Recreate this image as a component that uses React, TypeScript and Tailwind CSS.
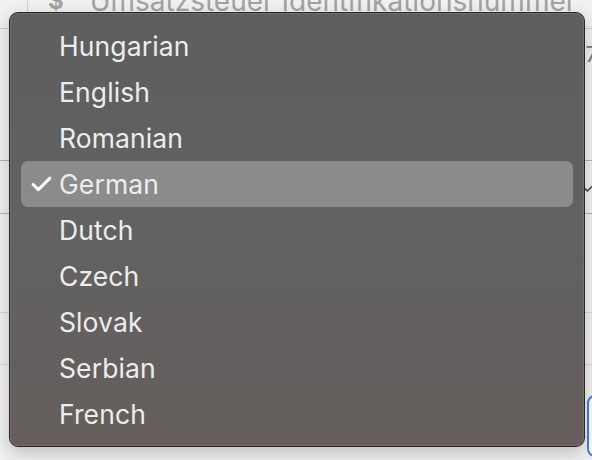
import { Check } from "lucide-react";

const languages = [
  "Hungarian",
  "English",
  "Romanian",
  "German",
  "Dutch",
  "Czech",
  "Slovak",
  "Serbian",
  "French",
];

const selected = "German";

function PageBehind() {
  return (
    <div className="flex h-full flex-col">
      <div className="flex h-[28px] items-start">
        <div className="ml-[27px] h-[14px] w-px bg-[#c9d2de]" />
        <div className="ml-[20px] mt-[-13px] flex items-center gap-[26px] text-[28px] leading-none text-[#a3a3a3] whitespace-nowrap">
          <span className="text-[24px] font-bold">$</span>
          <span>Umsatzsteuer Identifikationsnummer</span>
        </div>
      </div>
      <div className="flex h-[132px] justify-end border-t border-[#c5cfdd]">
        <span className="mr-[-6px] mt-[14px] text-[22px] leading-none text-[#777]">7</span>
      </div>
      <div className="flex h-[54px] items-center justify-end border-y border-[#a8b5cc]">
        <span className="mr-[-4px] text-[16px] leading-none text-[#444]">✓</span>
      </div>
      <div className="h-[98px]" />
      <div className="h-[52px] border-t border-[#d3d8de]" />
      <div className="flex flex-1 justify-end border-t border-[#d3d8de] pt-[30px]">
        <div className="mr-[-15px] h-[62px] w-[20px] rounded-[8px] border-2 border-[#3d7fe6] bg-white" />
      </div>
    </div>
  );
}

export default function App() {
  return (
    <div
      className="relative w-[592px] h-[460px] overflow-hidden bg-[#f1f1f1]"
      style={{ fontFamily: "Inter, 'Liberation Sans', sans-serif" }}
    >
      <PageBehind />

      {/* dropdown menu, floating over the page */}
      <div className="absolute left-[9px] top-[12px] w-[576px] h-[435px] rounded-[9px] border border-[#262626] bg-gradient-to-b from-[#5e5e5e] via-[#626262] to-[#655e5c] shadow-[0_6px_18px_rgba(0,0,0,0.22)]">
        <div className="h-full rounded-[8px] border border-[#7a7a7a]/60 px-[10px] py-[9px]">
          <ul className="flex flex-col">
            {languages.map((lang) => {
              const active = lang === selected;
              return (
                <li
                  key={lang}
                  className={`flex h-[46px] items-center rounded-[7px] ${
                    active ? "bg-[#8a8b8a]" : ""
                  }`}
                >
                  <span className="flex w-[38px] justify-center pl-[2px] pt-[1px]">
                    {active && <Check size={25} strokeWidth={3} className="text-white" />}
                  </span>
                  <span className="text-[26.5px] leading-none tracking-[0.1px] text-[#ededed]">
                    {lang}
                  </span>
                </li>
              );
            })}
          </ul>
        </div>
      </div>
    </div>
  );
}
